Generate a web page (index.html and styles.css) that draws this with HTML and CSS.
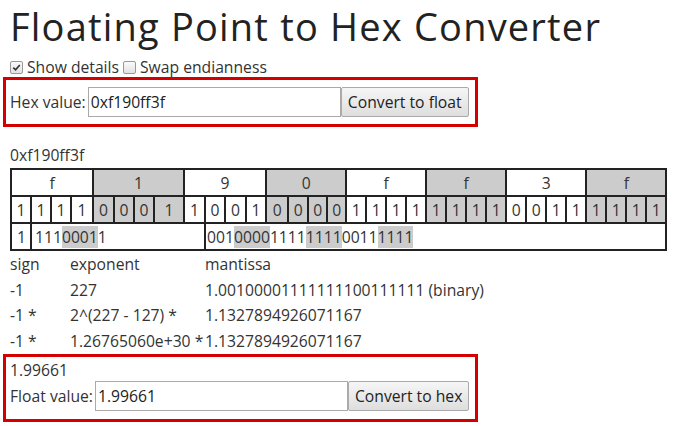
FILE: index.html
```html
<!DOCTYPE html>
<html>
<head>
<meta charset="utf-8">
<link rel="stylesheet" href="styles.css">
</head>
<body>
<h1 class="title">Floating Point to Hex Converter</h1>
<div class="options">
  <span class="check checked"><svg viewBox="0 0 12 12" width="12" height="12"><path d="M2.5 6.2 L5 8.6 L9.6 3.2" fill="none" stroke="#333" stroke-width="1.8"/></svg></span><span class="opt-label">Show details</span>
  <span class="check"></span><span class="opt-label">Swap endianness</span>
</div>
<div class="box box-hex">
  <span class="field-label">Hex value:</span><input class="field field-hex" value="0xf190ff3f"><button class="btn btn-float">Convert to float</button>
</div>
<div class="hex-echo">0xf190ff3f</div>
<table class="bits">
  <colgroup>
    <col class="c20"><col class="c20"><col class="c20"><col class="c22">
    <col class="c21"><col class="c20"><col class="c20"><col class="c30">
    <col class="c21"><col class="c20"><col class="c21"><col class="c20">
    <col class="c22"><col class="c20"><col class="c19"><col class="c19">
    <col class="c20"><col class="c20"><col class="c20"><col class="c20">
    <col class="c20"><col class="c20"><col class="c20"><col class="c20">
    <col class="c20"><col class="c20"><col class="c20"><col class="c20">
    <col class="c20"><col class="c20"><col class="c20"><col class="c20">
  </colgroup>
  <tr class="hex-row">
    <td colspan="4">f</td><td colspan="4" class="g">1</td><td colspan="4">9</td><td colspan="4" class="g">0</td><td colspan="4">f</td><td colspan="4" class="g">f</td><td colspan="4">3</td><td colspan="4" class="g">f</td>
  </tr>
  <tr class="bit-row">
    <td>1</td><td>1</td><td>1</td><td>1</td>
    <td class="g">0</td><td class="g">0</td><td class="g">0</td><td class="g">1</td>
    <td>1</td><td>0</td><td>0</td><td>1</td>
    <td class="g">0</td><td class="g">0</td><td class="g">0</td><td class="g">0</td>
    <td>1</td><td>1</td><td>1</td><td>1</td>
    <td class="g">1</td><td class="g">1</td><td class="g">1</td><td class="g">1</td>
    <td>0</td><td>0</td><td>1</td><td>1</td>
    <td class="g">1</td><td class="g">1</td><td class="g">1</td><td class="g">1</td>
  </tr>
  <tr class="part-row">
    <td class="sign">1</td>
    <td colspan="8" class="exp">111<span class="hl">0001</span>1</td>
    <td colspan="23" class="man">001<span class="hl">0000</span>1111<span class="hl">1111</span>0011<span class="hl">1111</span></td>
  </tr>
</table>
<div class="details">
  <span>sign</span><span>exponent</span><span>mantissa</span>
  <span>-1</span><span>227</span><span>1.00100001111111100111111 (binary)</span>
  <span>-1 *</span><span>2^(227 - 127) *</span><span>1.1327894926071167</span>
  <span>-1 *</span><span>1.26765060e+30 *</span><span>1.1327894926071167</span>
</div>
<div class="box box-float">
  <div class="float-echo">1.99661</div>
  <div class="float-line"><span class="field-label">Float value:</span><input class="field field-float" value="1.99661"><button class="btn btn-hex">Convert to hex</button></div>
</div>
</body>
</html>
```
FILE: styles.css
```css
html, body { margin: 0; padding: 0; background: #fff; }
body {
  padding: 0 10px;
  font-family: "Open Sans", "DejaVu Sans", sans-serif;
  font-size: 15.7px;
  color: #333;
}
.title {
  margin: 0;
  padding: 0;
  font-size: 38px;
  font-weight: 400;
  line-height: 52px;
  color: #222;
  letter-spacing: 1.2px;
  white-space: nowrap;
}
.options {
  display: flex;
  align-items: center;
  height: 20px;
  margin-top: 5px;
}
.check {
  display: inline-flex;
  width: 11px;
  height: 11px;
  border: 1px solid #999;
  border-radius: 2px;
  background: linear-gradient(#fafafa, #e2e2e2);
  margin-right: 4px;
}
.check svg { width: 11px; height: 11px; }
.opt-label { margin-right: 4px; }
.box {
  margin-left: -7px;
  width: 465px;
  border: 3px solid #d40000;
  padding-left: 4px;
}
.box-hex {
  display: flex;
  align-items: center;
  height: 44px;
}
.field-label { margin-right: 2px; }
.field {
  box-sizing: border-box;
  height: 30px;
  border: 1px solid #aaa;
  padding: 0 2px;
  font: inherit;
  color: #222;
  outline: none;
}
.field-hex { width: 253px; }
.field-float { width: 253px; }
.btn {
  box-sizing: border-box;
  height: 30px;
  border: 1px solid #aaa;
  border-radius: 2px;
  background: linear-gradient(#f6f6f6, #dedede);
  font: inherit;
  color: #222;
  padding: 0 6px;
  white-space: nowrap;
}
.btn-float { width: 128px; }
.btn-hex { width: 121px; }
.hex-echo {
  margin-top: 18px;
  line-height: 20px;
}
.bits {
  margin-top: 3px;
  width: 656px;
  border-collapse: collapse;
  table-layout: fixed;
  border: 2px solid #222;
}
.bits .c19 { width: 19px; }
.bits .c20 { width: 20px; }
.bits .c21 { width: 21px; }
.bits .c22 { width: 22px; }
.bits .c30 { width: 30px; }
.bits td {
  border: 2px solid #222;
  height: 25px;
  padding: 0;
  text-align: center;
  line-height: 20px;
}
.bits td.g { background: #ccc; }
.bits .part-row td { text-align: left; padding-left: 3px; }
.bits .part-row td.sign { padding-left: 5px; }
.bits .part-row td.man { padding-left: 1px; }
.hl { background: #ccc; display: inline-block; line-height: 22px; }
.details {
  display: grid;
  grid-template-columns: 60px 135px auto;
  margin-top: 1px;
  line-height: 25.7px;
}
.box-float {
  margin-top: -1px;
  padding-top: 2px;
  padding-bottom: 8px;
}
.float-echo { line-height: 22px; }
.float-line {
  display: flex;
  align-items: center;
  height: 30px;
  margin-top: 0;
}
```
